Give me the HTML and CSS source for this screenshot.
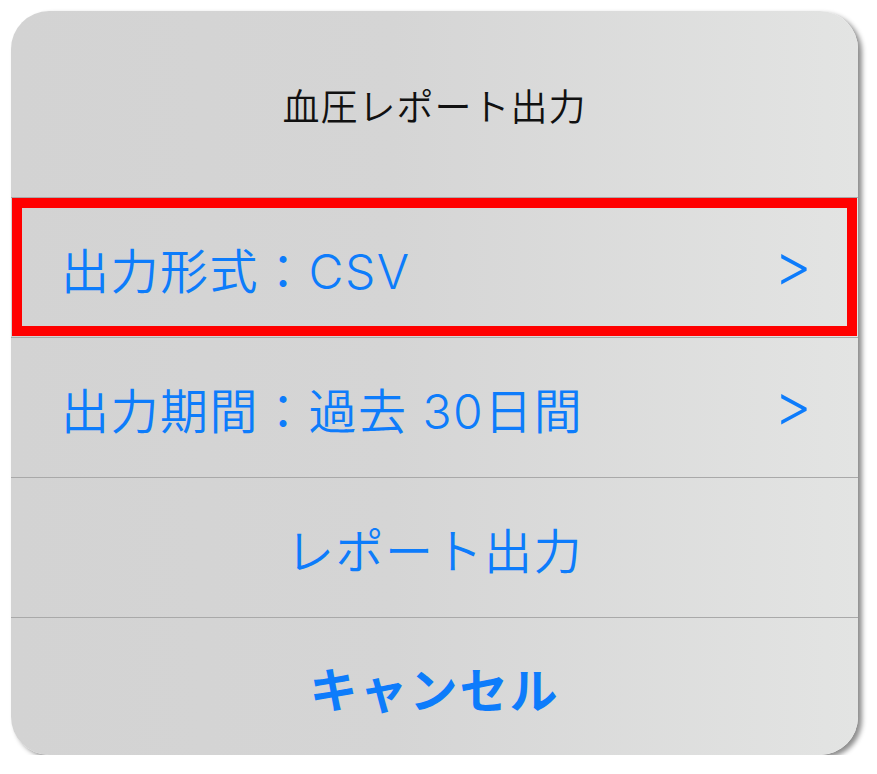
FILE: index.html
```html
<!DOCTYPE html>
<html lang="ja">
<head>
	<title>血圧レポート出力</title>
	<meta http-equiv="content-type" content="text/html; charset=UTF-8">
	<link rel="stylesheet" href="styles.css">
</head>
<body>
	<div id="sheet">
		<div class="title">血圧レポート出力</div>
		<div class="row picked">
			<span class="label">出力形式：CSV</span>
			<span class="chevron">&gt;</span>
		</div>
		<div class="row">
			<span class="label">出力期間：過去 30日間</span>
			<span class="chevron">&gt;</span>
		</div>
		<div class="row center">
			<span class="label">レポート出力</span>
		</div>
		<div class="row center last">
			<span class="label bold">キャンセル</span>
		</div>
	</div>
</body>
</html>
```

FILE: styles.css
```css
*{
	box-sizing: border-box;
}

body{
	margin: 0;
	background: #fff;
	font-family: Inter, "Noto Sans CJK JP", sans-serif;
}

#sheet{
	width: 847px;
	margin: 11px 0 0 11px;
	border-radius: 38px;
	overflow: hidden;
	background: linear-gradient(to right, #d3d3d3 0%, #d5d5d5 45%, #e3e4e3 100%);
	box-shadow: 4px 3px 5px rgba(0, 0, 0, 0.45);
}

#sheet .title{
	height: 186px;
	display: flex;
	align-items: center;
	justify-content: center;
	padding-top: 2px;
	font-size: 37px;
	font-weight: 350;
	letter-spacing: 1px;
	color: #111;
}

#sheet .row{
	height: 140px;
	border-top: 1px solid #a9a9a9;
	display: flex;
	align-items: center;
	justify-content: space-between;
	padding: 0 46px 0 50px;
	color: #0d7cfb;
}

#sheet .row.picked{
	outline: 10px solid #ff0000;
	outline-offset: -11px;
}

#sheet .row.center{
	justify-content: center;
	padding: 0;
}

#sheet .row.last{
	height: 138px;
}

#sheet .label{
	font-size: 48px;
	font-weight: 350;
	letter-spacing: 1.5px;
}

#sheet .label.bold{
	font-weight: bold;
	letter-spacing: 2px;
}

#sheet .chevron{
	font-size: 58px;
	font-weight: 300;
	padding-bottom: 6px;
}
```
